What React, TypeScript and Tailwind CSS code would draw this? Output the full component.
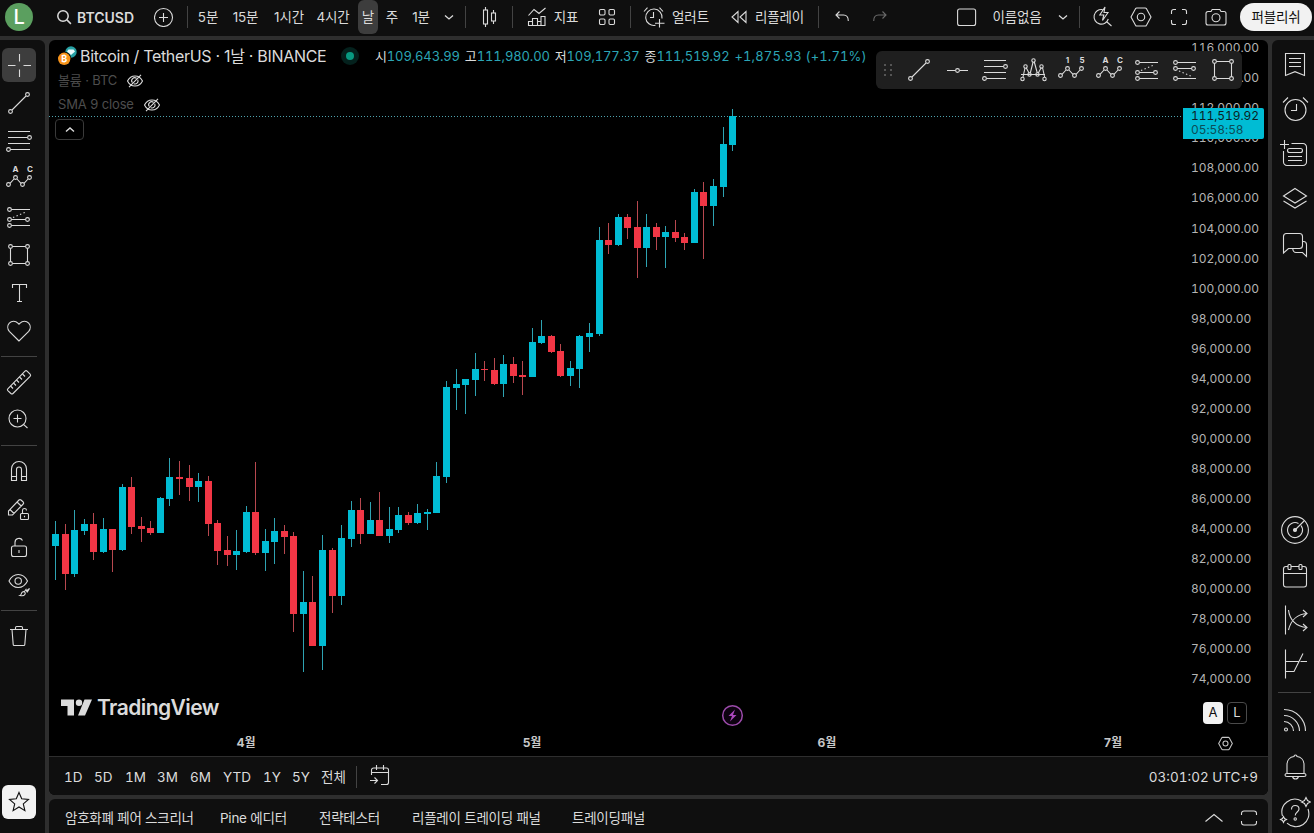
import type { ReactNode } from 'react';
import clsx from 'clsx';

interface IconProps {
    size?: number;
    children: ReactNode;
    className?: string;
}

/** Thin outline icon, drawn on a square grid of its own pixel size */
function Icon({ size = 28, children, className }: IconProps) {
    return (
        <svg
            width={size}
            height={size}
            viewBox={`0 0 ${size} ${size}`}
            fill="none"
            stroke="currentColor"
            strokeWidth="1.1"
            className={clsx('shrink-0', className)}
        >
            {children}
        </svg>
    );
}

function Dots({ points, r = 1.9 }: { points: [number, number][]; r?: number }) {
    return (
        <>
            {points.map(([x, y]) => (
                <circle key={`${x}-${y}`} cx={x} cy={y} r={r} />
            ))}
        </>
    );
}

/* ---------- drawing tools ---------- */

const CrossIcon = () => (
    <Icon>
        <path d="M3 14.5h7.5M18.5 14.5H26M14.5 3v7.5M14.5 18.5V26" />
    </Icon>
);

const TrendIcon = () => (
    <Icon>
        <path d="M7 21 21 7" />
        <Dots points={[[22.5, 5.5], [5.5, 22.5]]} />
    </Icon>
);

const HLineIcon = () => (
    <Icon>
        <path d="M4 14.5h8.4M16.6 14.5H25" />
        <Dots points={[[14.5, 14.5]]} />
    </Icon>
);

const FibIcon = () => (
    <Icon>
        <path d="M3 4.5h22M3 10.5h19.5M3 16.5h22M5.5 22.5H25" />
        <Dots points={[[24.5, 10.5], [3.5, 22.5]]} />
    </Icon>
);

const PatternIcon = () => (
    <Icon>
        <path d="M4 21l2-9M7.300 12l3 5.500M11.300 17l2.800-11M15.300 6l3 11M19.300 17l3-5.500M23.600 12l2 9M2 18.500h24" />
        <Dots points={[[3.5, 23], [6.5, 10.5], [10.5, 18.5], [14.5, 4.5], [18.5, 18.5], [22.5, 10.5], [25.5, 23]]} r={1.7} />
    </Icon>
);

function WaveIcon({ from, to }: { from: string; to: string }) {
    return (
        <Icon>
            <path d="M5 18.300 9 14M12 14l4 4.300M19 18.300 23 14" />
            <Dots points={[[3.5, 19.5], [10.5, 12.5], [17.5, 19.5], [24.5, 12.5]]} />
            <text x="10.500" y="7" textAnchor="middle" stroke="none" fill="currentColor" className="font-['Inter'] text-[8px] font-bold">{from}</text>
            <text x="25" y="7" textAnchor="middle" stroke="none" fill="currentColor" className="font-['Inter'] text-[8px] font-bold">{to}</text>
        </Icon>
    );
}

const LongIcon = () => (
    <Icon>
        <path d="M6.500 6.500H25M6.500 16.500h14M6.500 22.500H25" />
        <path d="M8 14.500 22 8.500" strokeDasharray="1.400 2.400" />
        <Dots points={[[4.5, 6.5], [4.5, 16.5], [22.5, 16.5], [4.5, 22.5]]} />
    </Icon>
);

const ShortIcon = () => (
    <Icon>
        <path d="M6.500 6.500H25M6.500 12.500h14M6.500 22.500H25" />
        <path d="M8 15 22 21" strokeDasharray="1.400 2.400" />
        <Dots points={[[4.5, 6.5], [4.5, 12.5], [22.5, 12.5], [4.5, 22.5]]} />
    </Icon>
);

const RectIcon = () => (
    <Icon>
        <path d="M7.500 5.500h13M7.500 22.500h13M5.500 7.500v13M22.500 7.500v13" />
        <Dots points={[[5.5, 5.5], [22.5, 5.5], [5.5, 22.5], [22.5, 22.5]]} />
    </Icon>
);

const TextIcon = () => (
    <Icon>
        <path d="M7.500 9V5.500h14V9M14.500 5.500v17M12 22.500h5" />
    </Icon>
);

const HeartIcon = () => (
    <Icon>
        <path d="M14 24 4.300 14.300a6.300 6.300 0 0 1 0-8.200 5.900 5.900 0 0 1 8.600 0L14 7.300l1.100-1.200a5.900 5.900 0 0 1 8.600 0 6.300 6.300 0 0 1 0 8.200z" />
    </Icon>
);

const RulerIcon = () => (
    <Icon>
        <path d="M2.800 20.800 20 3.200a1.500 1.500 0 0 1 2.100 0l3 3a1.500 1.500 0 0 1 0 2.100L8 25.500a1.500 1.500 0 0 1-2.100 0l-3.100-2.900a1.300 1.300 0 0 1 0-1.800z" />
        <path d="m5.500 18 2.500 2.500M8.500 15l2.500 2.500M11.500 12l2.500 2.500M14.500 9l2.500 2.500M17.500 6l2.500 2.500" />
    </Icon>
);

const ZoomInIcon = () => (
    <Icon>
        <circle cx="12.500" cy="12.500" r="8.500" />
        <path d="M12.500 8.500v8M8.500 12.500h8M18.700 18.700l3.800 3.300" />
    </Icon>
);

const MagnetIcon = () => (
    <Icon>
        <path d="M6.500 23.500V12a7.500 7.500 0 0 1 15 0v11.500h-5V12.500a2.500 2.500 0 0 0-5 0v11zM6.500 19.500h5M16.500 19.500h5" />
    </Icon>
);

const PencilLockIcon = () => (
    <Icon>
        <path d="M3.500 20v-4L14 5a1.500 1.500 0 0 1 2 0l2.200 2a1.500 1.500 0 0 1 0 2L7.500 20zM12 7l4.200 4M5 14.500l4 4" />
        <rect x="15.500" y="18.500" width="8" height="6" rx="1" />
        <path d="M17.500 18.500v-3a2 2 0 0 1 4 0M19.500 20.700v1.600" />
    </Icon>
);

const UnlockIcon = () => (
    <Icon>
        <rect x="6.500" y="13" width="15" height="10.500" rx="2" />
        <path d="M10 13V9.500a4 4 0 0 1 7.500-2M14 17v3" />
    </Icon>
);

const EyeBrushIcon = () => (
    <Icon>
        <path d="M4 10c2-4 5.500-6.500 9.200-6.500S20.500 6 22.500 10c-2 4-5.600 6.500-9.300 6.500S6 14 4 10z" />
        <circle cx="13.200" cy="10" r="3.200" />
        <path d="M15 24.500c1.500-.5 1-2.500 2.500-3.500s3.500.5 2.500 2.200-3 1.800-5 1.300zM19.500 20.500l1.500-2 .5 1.500 3-2.500-2.500 4" />
    </Icon>
);

const TrashIcon = () => (
    <Icon>
        <path d="M5 7.500h18M10.500 7.500V5.700c0-.7.500-1.200 1.200-1.200h4.600c.7 0 1.200.5 1.200 1.200v1.800M7 7.500l1.200 15c0 .6.500 1 1 1h9.600c.5 0 1-.4 1-1L21 7.500" />
    </Icon>
);

const StarIcon = () => (
    <Icon>
        <path d="m14 4.500 2.700 6.300 6.800.6-5.200 4.500 1.600 6.700-5.900-3.600-5.900 3.600 1.600-6.700-5.200-4.500 6.800-.6z" />
    </Icon>
);

/* ---------- header icons ---------- */

const SearchIcon = () => (
    <Icon size={16} className="stroke-[1.5]">
        <circle cx="7" cy="7" r="5.200" />
        <path d="m10.900 10.900 4 4" />
    </Icon>
);

const PlusCircleIcon = () => (
    <Icon size={20}>
        <circle cx="9.500" cy="10.500" r="9" />
        <path d="M9.500 6v9M5 10.500h9" />
    </Icon>
);

const ChevronDown = () => (
    <Icon size={10} className="stroke-[1.3]">
        <path d="m1 3.500 4 3.500 4-3.500" />
    </Icon>
);

const CandlesIcon = () => (
    <Icon size={20}>
        <path d="M6.500 0v3M6.500 17v3M14.500 3v3M14.500 14v3" />
        <rect x="4.500" y="3" width="4" height="14" />
        <rect x="12.500" y="6" width="4" height="8" />
    </Icon>
);

const IndicatorsIcon = () => (
    <Icon size={20}>
        <path d="m1.500 8.500 5.500-6 5 4 6.500-5.500M1.500 18.500v-4h4v4zM5.500 18.500v-7h5v7M10.500 18.500v-4h3.500M14 18.500v-9h4v9zM1.500 18.500H18" />
    </Icon>
);

const LayoutGridIcon = () => (
    <Icon size={18}>
        <rect x="1.500" y="1.500" width="5.500" height="5.500" rx="1.200" />
        <rect x="11" y="1.500" width="5.500" height="5.500" rx="1.200" />
        <rect x="1.500" y="11" width="5.500" height="5.500" rx="1.200" />
        <rect x="11" y="11" width="5.500" height="5.500" rx="1.200" />
    </Icon>
);

const AlertAddIcon = () => (
    <Icon size={22}>
        <path d="M12.500 19.300A8.200 8.200 0 1 1 19 12.500M10.500 6v5.500H7M1 5.500 4.500 1.700M16.500 1.700 20 5.500M16.500 13v8.500M12 17.200h9.500" />
    </Icon>
);

const ReplayIcon = () => (
    <Icon size={18}>
        <path d="M8 3.500v11L2 9zM16 3.500v11L10 9z" />
    </Icon>
);

const UndoIcon = ({ flip = false }: { flip?: boolean }) => (
    <Icon size={16} className={clsx(flip && '-scale-x-100 text-[#6a6a6a]')}>
        <path d="M5.500 2.500 2 6l3.500 3.500M2 6h7.500c3 0 4.800 2 4.800 6" />
    </Icon>
);

const SquareIcon = () => (
    <Icon size={20}>
        <rect x=".600" y="2" width="18" height="16.500" rx="2" />
    </Icon>
);

const QuickSearchIcon = () => (
    <Icon size={22}>
        <path d="M10.500 3.600A7.300 7.300 0 1 0 16.300 13M15 16l4.500 4M13 1 7.800 9h4l-1.300 5.500L16 6.500h-4z" />
    </Icon>
);

const HexIcon = ({ size = 22 }: { size?: number }) => (
    <svg width={size} height={size} viewBox="0 0 22 22" fill="none" stroke="currentColor" strokeWidth={size > 18 ? 1.1 : 1.5}>
        <path d="M6.700 2h8.600c.5 0 .9.300 1.200.7L21 11l-4.500 8.300c-.3.400-.7.700-1.200.7H6.700c-.5 0-.9-.3-1.200-.7L1 11l4.500-8.300c.3-.4.700-.7 1.200-.7z" />
        <circle cx="11" cy="11" r="3.700" />
    </svg>
);

const FullscreenIcon = () => (
    <Icon size={18}>
        <path d="M1.500 6V3.500a2 2 0 0 1 2-2H6M12 1.500h2.500a2 2 0 0 1 2 2V6M16.500 12v2.500a2 2 0 0 1-2 2H12M6 16.500H3.500a2 2 0 0 1-2-2V12" />
    </Icon>
);

const CameraIcon = () => (
    <Icon size={22}>
        <path d="M7.200 3.500 6 5.500H3a2 2 0 0 0-2 2v9.500a2 2 0 0 0 2 2h16a2 2 0 0 0 2-2V7.500a2 2 0 0 0-2-2h-3l-1.200-2z" />
        <circle cx="11" cy="11.800" r="4" />
    </Icon>
);

const EyeOffIcon = () => (
    <Icon size={18}>
        <path d="M1.500 9c1.600-3.200 4.300-5 7.500-5s5.900 1.800 7.500 5c-1.600 3.200-4.300 5-7.500 5S3.100 12.200 1.500 9zM3 15.200 15 2.800M6.300 10.500A3 3 0 0 1 10.500 6.300M11.800 7.800A3 3 0 0 1 7.800 11.700" />
    </Icon>
);

const GotoDateIcon = () => (
    <Icon size={22}>
        <path d="M2.500 10V5a2 2 0 0 1 2-2h13a2 2 0 0 1 2 2v12.500a2 2 0 0 1-2 2H12M2.500 7.500h17M7.500 0v5M14.500 0v5M1 15.500h7.500M5.500 12.500l3 3-3 3" />
    </Icon>
);

/* ---------- right rail ---------- */

const WatchlistIcon = () => (
    <Icon size={32}>
        <path d="M6.500 4.500h19v22L16 22.700l-9.500 3.800zM10 9.500h12M10 13.500h12M10 17.500h12" />
    </Icon>
);

const AlarmIcon = () => (
    <Icon size={32}>
        <circle cx="16.500" cy="17" r="10.500" />
        <path d="M17.500 11v6.500H12M4 9.500l5-5M24 4.500l5 5" />
    </Icon>
);

const NotesIcon = () => (
    <Icon size={32}>
        <path d="M5.500 2v9M1 6.500h9M12.500 5.500H24a3.500 3.500 0 0 1 3.500 3.500v15a3.500 3.500 0 0 1-3.500 3.500H8A3.500 3.500 0 0 1 4.500 24V13M9 18.500h14M9 22.500h14" />
        <rect x="8.500" y="10.500" width="15" height="4" rx="2" />
    </Icon>
);

const LayersIcon = () => (
    <Icon size={32}>
        <path d="m16 5.500 11.500 7.500L16 20 4.500 13zM4.500 18 16 25l11.500-7" />
    </Icon>
);

const ChatIcon = () => (
    <Icon size={32}>
        <path d="M4.500 24V7.500c0-2 1-3 3-3h13c2 0 3 1 3 3v9c0 2-1 3-3 3H9.500zM23.500 12.500h1c2 0 3 1 3 3v12l-4-4H17c-2 0-3-1-3.300-4" />
    </Icon>
);

const RadarIcon = () => (
    <Icon size={32}>
        <circle cx="16" cy="16" r="13.400" />
        <path d="M22 11.500A7.500 7.500 0 1 1 19.500 9.400M16 16 25 7" />
        <circle cx="16" cy="16" r="1.500" fill="currentColor" />
    </Icon>
);

const CalendarIcon = () => (
    <Icon size={32}>
        <path d="M9 7.500H7A2.500 2.500 0 0 0 4.500 10v15.500A2.500 2.500 0 0 0 7 28h18a2.500 2.500 0 0 0 2.500-2.500V10A2.500 2.500 0 0 0 25 7.500h-2M12 7.500h8M4.500 14.500h23" />
        <rect x="9" y="5.500" width="3" height="5" rx="1" />
        <rect x="20" y="5.500" width="3" height="5" rx="1" />
    </Icon>
);

const OptionsCurveIcon = () => (
    <Icon size={32}>
        <path d="M6.500 1.500v29M9.500 26C12 16 17 10.500 28 9.500M9.500 6c1 9 7 17 18.500 17.500M24 6l4 3.500-4 3.500M24 20l4 3.500-4 3.500" />
    </Icon>
);

const PayoffIcon = () => (
    <Icon size={32}>
        <path d="M6.500 1.500v29M6.500 13.500h13M21.500 13.500H28M6.500 23.500H15l9-18" />
    </Icon>
);

const FeedIcon = () => (
    <Icon size={32}>
        <circle cx="7" cy="24.500" r="1.500" />
        <path d="M5 16.500a9.500 9.500 0 0 1 9.500 9.500M5 10.500A15.500 15.500 0 0 1 20.500 26M5 4.500A21.500 21.500 0 0 1 26.500 26" />
    </Icon>
);

const BellIcon = () => (
    <Icon size={32}>
        <path d="M8 22.500v-9c0-4.500 3-7.500 7-8a1.500 1.500 0 0 1 3 0c4 .5 7 3.500 7 8v9M8 22.500h17c1.500 0 2 .5 2 1.500s-.5 1.500-2 1.500H8c-1.500 0-2-.5-2-1.500s.5-1.500 2-1.500zM13.500 25.500c.5 2 1.500 2.500 3 2.500s2.500-.5 3-2.500" />
    </Icon>
);

const HelpIcon = () => (
    <Icon size={32}>
        <path d="M22.500 5A13 13 0 0 0 3.500 20M8 27.200A13 13 0 0 0 29 13" />
        <path d="M12.500 13.500c0-2.500 1.500-4 3.700-4s3.800 1.500 3.800 3.500c0 3-3.800 3-3.800 6.500" />
        <circle cx="16.200" cy="23" r="1.200" />
        <path d="M27 1.500 28.500 4.500 31.500 6 28.500 7.500 27 10.500 25.500 7.500 22.500 6 25.500 4.500zM4.500 20.500l1 2 2 1-2 1-1 2-1-2-2-1 2-1z" />
    </Icon>
);

/* ---------- chart data ---------- */

const UP = '#00bcd4';
const DOWN = '#f23645';

// [x, bodyTop, bodyBottom, high, low, up]
const CANDLES: [number, number, number, number, number, number][] = [
    [52, 534, 546, 521, 580, 1], [62, 534, 574, 524, 590, 0], [71, 530, 574, 510, 577, 1], [81, 524, 531, 519, 535, 1],
    [90, 524, 552, 513, 560, 0], [100, 529, 552, 518, 553, 1], [109, 529, 550, 529, 572, 0], [119, 487, 550, 484, 551, 1],
    [128, 487, 527, 477, 534, 0], [138, 526, 529, 517, 542, 0], [147, 528, 533, 521, 535, 0], [157, 498, 533, 497, 533, 1],
    [166, 477, 499, 458, 506, 1], [176, 477, 479, 461, 495, 0], [186, 478, 487, 465, 501, 0], [195, 481, 487, 473, 502, 1],
    [205, 481, 524, 476, 536, 0], [214, 523, 551, 520, 565, 0], [224, 550, 555, 536, 566, 0], [233, 551, 555, 530, 570, 1],
    [243, 512, 552, 506, 553, 1], [252, 512, 553, 462, 555, 0], [262, 541, 553, 529, 571, 1], [271, 531, 542, 518, 564, 1],
    [281, 531, 537, 525, 554, 0], [290, 536, 614, 532, 632, 0], [300, 602, 614, 571, 672, 1], [309, 602, 646, 576, 646, 0],
    [319, 550, 646, 535, 670, 1], [329, 550, 596, 548, 613, 0], [338, 538, 596, 525, 605, 1], [348, 510, 539, 501, 547, 1],
    [357, 510, 534, 498, 544, 0], [367, 520, 534, 502, 534, 1], [376, 520, 536, 492, 536, 0], [386, 529, 536, 507, 543, 1],
    [395, 515, 530, 507, 533, 1], [405, 515, 523, 512, 525, 0], [414, 513, 523, 504, 524, 1], [424, 512, 514, 509, 530, 1],
    [433, 476, 513, 462, 513, 1], [443, 387, 477, 381, 483, 1], [453, 384, 388, 369, 410, 1], [462, 379, 385, 379, 414, 1],
    [472, 369, 380, 353, 396, 1], [481, 369, 370, 361, 381, 0], [491, 370, 384, 358, 385, 0], [500, 364, 384, 355, 397, 1],
    [510, 364, 376, 357, 383, 0], [519, 375, 377, 361, 395, 0], [529, 342, 377, 328, 377, 1], [538, 336, 343, 320, 344, 1],
    [548, 336, 352, 335, 353, 0], [557, 351, 376, 344, 377, 0], [567, 368, 376, 361, 386, 1], [576, 336, 369, 335, 388, 1],
    [586, 333, 337, 323, 352, 1], [596, 240, 334, 227, 336, 1], [605, 240, 245, 223, 254, 0], [615, 217, 245, 214, 246, 1],
    [624, 217, 228, 214, 239, 0], [634, 227, 248, 201, 278, 0], [643, 227, 248, 214, 267, 1], [653, 227, 237, 223, 250, 0],
    [662, 232, 237, 226, 268, 1], [672, 232, 238, 220, 242, 0], [681, 237, 243, 233, 250, 0], [691, 192, 243, 189, 243, 1],
    [700, 192, 206, 182, 259, 0], [710, 186, 206, 179, 226, 1], [720, 144, 187, 127, 197, 1], [729, 116, 145, 109, 151, 1],
];

function Candles() {
    return (
        <svg viewBox="49 40 1134 690" width="1134" height="690" shapeRendering="crispEdges" className="absolute inset-0">
            <path d="M49 116.500H1183" stroke="#4fa3ae" strokeWidth="1" strokeDasharray="1 2" />
            {CANDLES.map(([x, top, bottom, high, low, up]) => (
                <g key={x} fill={up ? UP : DOWN}>
                    <rect x={x + 3} y={high} width="1" height={low - high} fill={up ? '#2ea3b2' : '#b8484f'} />
                    <rect x={x} y={top} width="7" height={bottom - top} />
                </g>
            ))}
            <g shapeRendering="auto">
                <circle cx="732.500" cy="715.500" r="9.800" fill="#0d0210" stroke="#9c4bab" strokeWidth="1.500" />
                <path d="m735 709.500-6.500 6.500h3.500l-2 5.500 6.500-6.500H733z" fill="#ab47bc" />
            </g>
        </svg>
    );
}

const PRICES = Array.from({ length: 22 }, (_, i) => 116000 - i * 2000);

function PriceAxis() {
    return (
        <div className="relative flex w-[85px] flex-col overflow-hidden">
            <div className="-mt-[6.8px] text-[12px] tracking-[-0.07px] text-[#b4b4b4] tabular-nums">
                {PRICES.map((p) => (
                    <div key={p} className="flex h-[30.05px] items-center pl-2">
                        {p.toLocaleString('en-US')}.00
                    </div>
                ))}
            </div>
            <div className="mt-[8px] flex gap-1 pl-5 text-[13px]">
                <div className="flex h-[22px] w-5 items-center justify-center rounded bg-[#f2f2f2] text-[#0f0f0f]">A</div>
                <div className="flex h-[22px] w-5 items-center justify-center rounded border border-[#4a4a4a]">L</div>
            </div>
            {/* Last price */}
            <div className="absolute top-[68px] left-0 h-[31px] w-[81px] rounded-r-[2px] bg-[#00bcd4] pt-px pl-2 text-[12px] leading-[14px] tracking-[-0.07px] text-[#0b1f24] tabular-nums">
                <div>111,519.92</div>
                <div className="text-[#0b4d57]">05:58:58</div>
            </div>
        </div>
    );
}

function Ohlc({ label, value }: { label: string; value: string }) {
    return (
        <span className="flex">
            <span className="text-[#dbdbdb]">{label}</span>
            <span>{value}</span>
        </span>
    );
}

function Legend() {
    return (
        <div className="relative flex flex-col">
            <div className="mt-1 flex h-6 items-center pl-[9px]">
                <svg width="19" height="20" viewBox="0 0 19 20">
                    <circle cx="13" cy="6" r="5.700" fill="#26a0a3" />
                    <path d="M10.500 3.500h5l1.500 2-4 3.500-4-3.500z" fill="#eafafa" />
                    <circle cx="6.200" cy="12.800" r="7" fill="#000" />
                    <circle cx="6.200" cy="12.800" r="6.200" fill="#f7931a" />
                    <text x="6.300" y="16.300" textAnchor="middle" fill="#fff" className="font-['Inter'] text-[9px] font-bold">₿</text>
                </svg>
                <div className="ml-[3px] w-[261px] text-[16px] tracking-[-0.31px] whitespace-nowrap text-[#dbdbdb]">
                    Bitcoin / TetherUS · 1날 · BINANCE
                </div>
                <div className="flex h-[18px] w-[18px] items-center justify-center rounded-full bg-[#04211d]">
                    <div className="h-2 w-2 rounded-full bg-[#089981]" />
                </div>
                <div className="mt-[2px] ml-4 flex gap-[5px] text-[13px] tracking-[-0.14px] whitespace-nowrap text-[#2ba5b5] tabular-nums">
                    <Ohlc label="시" value="109,643.99" />
                    <Ohlc label="고" value="111,980.00" />
                    <Ohlc label="저" value="109,177.37" />
                    <Ohlc label="종" value="111,519.92" />
                    <span className="tracking-[0.15px]">+1,875.93 (+1.71%)</span>
                </div>
            </div>
            <div className="flex h-6 items-center gap-[9px] pt-px pl-[9px] text-[13px] tracking-[-0.13px] text-[#4d4d4d]">
                볼륨 · BTC
                <span className="text-[#dbdbdb]"><EyeOffIcon /></span>
            </div>
            <div className="flex h-6 items-center gap-[9px] pt-px pl-[9px] text-[13px] tracking-[-0.13px] text-[#4d4d4d]">
                SMA 9 close
                <span className="text-[#dbdbdb]"><EyeOffIcon /></span>
            </div>
            <div className="mt-[3px] ml-[6px] flex h-[21px] w-[29px] items-center justify-center rounded border border-[#3a3a3a] bg-black">
                <Icon size={10} className="stroke-[1.4]">
                    <path d="m1 6.500 4-3.500 4 3.500" />
                </Icon>
            </div>
        </div>
    );
}

function FloatingTools() {
    const tools = [
        <TrendIcon />, <HLineIcon />, <FibIcon />, <PatternIcon />, <WaveIcon from="1" to="5" />,
        <WaveIcon from="A" to="C" />, <LongIcon />, <ShortIcon />, <RectIcon />,
    ];
    return (
        <div className="absolute top-[11px] left-[827px] flex h-[38px] items-center rounded-md bg-[#1f1f1f]">
            <div className="grid w-6 grid-cols-2 justify-center gap-x-1 gap-y-[3px] px-2">
                {Array.from({ length: 6 }, (_, i) => (
                    <div key={i} className="h-[2px] w-[2px] bg-[#555]" />
                ))}
            </div>
            {tools.map((tool, i) => (
                <div key={i} className="flex w-[38px] justify-center">{tool}</div>
            ))}
        </div>
    );
}

function Cell({ className, children }: { className: string; children?: ReactNode }) {
    return <div className={clsx('flex shrink-0 items-center justify-center whitespace-nowrap', className)}>{children}</div>;
}

function Divider({ className }: { className: string }) {
    return (
        <Cell className={className}>
            <div className="h-[22px] w-px bg-[#434343]" />
        </Cell>
    );
}

function TopBar() {
    return (
        <header className="flex h-9 items-center bg-[#0f0f0f] pb-[2px] text-[13.5px] tracking-[-0.15px]">
            <Cell className="w-[43px] pr-[5px]">
                <div className="flex h-7 w-7 items-center justify-center rounded-full bg-[#5b9f5f] text-[20px] font-medium text-white">L</div>
            </Cell>
            <Cell className="w-[104px] gap-[5px] text-[14px] font-semibold tracking-normal">
                <SearchIcon />
                BTCUSD
            </Cell>
            <Cell className="w-[33px]"><PlusCircleIcon /></Cell>
            <Divider className="w-[15px]" />
            <Cell className="w-[26px]">5분</Cell>
            <Cell className="w-[49px]">15분</Cell>
            <Cell className="w-[38px]">1시간</Cell>
            <Cell className="w-[50px]">4시간</Cell>
            <Cell className="h-[34px] w-5 rounded-md bg-[#3d3d3d]">날</Cell>
            <Cell className="w-[28px]">주</Cell>
            <Cell className="w-[30px]">1분</Cell>
            <Cell className="w-[26px]"><ChevronDown /></Cell>
            <Divider className="w-[7px]" />
            <Cell className="w-10"><CandlesIcon /></Cell>
            <Divider className="w-[7px]" />
            <Cell className="w-[73px] gap-[7px]"><IndicatorsIcon />지표</Cell>
            <Cell className="w-9"><LayoutGridIcon /></Cell>
            <Divider className="w-[11px]" />
            <Cell className="w-20 gap-[7px]"><AlertAddIcon />얼러트</Cell>
            <Cell className="w-[102px] gap-[7px]"><ReplayIcon />리플레이</Cell>
            <Divider className="w-px" />
            <Cell className="w-[45px]"><UndoIcon /></Cell>
            <Cell className="w-8"><UndoIcon flip /></Cell>
            <Cell className="ml-[50px] w-[42px]"><SquareIcon /></Cell>
            <Cell className="w-[58px]">이름없음</Cell>
            <Cell className="w-[33px]"><ChevronDown /></Cell>
            <Divider className="w-px" />
            <Cell className="w-[46px]"><QuickSearchIcon /></Cell>
            <Cell className="w-[30px]"><HexIcon /></Cell>
            <Cell className="w-[45px]"><FullscreenIcon /></Cell>
            <Cell className="w-[30px]"><CameraIcon /></Cell>
            <Cell className="ml-[9px] h-7 w-[72px] rounded-full bg-[#f2f2f2] text-[#0f0f0f]">퍼블리쉬</Cell>
        </header>
    );
}

function LeftBar() {
    const drawing = [<TrendIcon />, <FibIcon />, <WaveIcon from="A" to="C" />, <LongIcon />, <RectIcon />, <TextIcon />, <HeartIcon />];
    const cell = 'h-[38px] w-[38px]';
    return (
        <aside className="flex w-[45px] flex-col rounded-tr-md bg-[#0f0f0f] pt-2">
            <Cell className="mb-[2px] ml-[2px] h-[34px] w-[34px] rounded-md bg-[#3d3d3d]"><CrossIcon /></Cell>
            {drawing.map((icon, i) => <Cell key={i} className={cell}>{icon}</Cell>)}
            <div className="mt-[6px] mb-[6px] ml-px h-px w-9 bg-[#434343]" />
            <Cell className={cell}><RulerIcon /></Cell>
            <Cell className={cell}><ZoomInIcon /></Cell>
            <div className="mt-[6px] mb-[6px] ml-px h-px w-9 bg-[#434343]" />
            <Cell className={cell}><MagnetIcon /></Cell>
            <Cell className={cell}><PencilLockIcon /></Cell>
            <Cell className={cell}><UnlockIcon /></Cell>
            <Cell className={cell}><EyeBrushIcon /></Cell>
            <div className="mt-[6px] mb-[6px] ml-px h-px w-9 bg-[#434343]" />
            <Cell className={cell}><TrashIcon /></Cell>
            <Cell className="mt-auto mb-[14px] ml-[2px] h-[34px] w-[34px] rounded-md bg-[#f2f2f2] text-[#0f0f0f]"><StarIcon /></Cell>
        </aside>
    );
}

function RightBar() {
    return (
        <aside className="flex w-[42px] flex-col rounded-tl-md bg-[#0f0f0f] pt-[3px] pl-1">
            <Cell className="h-11"><WatchlistIcon /></Cell>
            <Cell className="h-11"><AlarmIcon /></Cell>
            <Cell className="h-[46px]"><NotesIcon /></Cell>
            <Cell className="h-[43px]"><LayersIcon /></Cell>
            <Cell className="h-[50px]"><ChatIcon /></Cell>
            <Cell className="mt-[238px] h-11"><RadarIcon /></Cell>
            <Cell className="h-[46px]"><CalendarIcon /></Cell>
            <Cell className="h-[43px]"><OptionsCurveIcon /></Cell>
            <Cell className="h-[46px]"><PayoffIcon /></Cell>
            <div className="mt-[5px] ml-[2px] h-px w-[33px] shrink-0 bg-[#434343]" />
            <Cell className="mt-[4px] h-[48px]"><FeedIcon /></Cell>
            <Cell className="h-[44px]"><BellIcon /></Cell>
            <Cell className="h-[46px]"><HelpIcon /></Cell>
        </aside>
    );
}

function Logo() {
    return (
        <div className="relative mt-auto mb-[10px] ml-3 flex items-center text-[#dbdbdb]">
            <svg width="31" height="17" viewBox="0 0 31 17" fill="currentColor">
                <path d="M0 .500h13v16H6.500V7H0zM23.500.500H31l-7 16h-7z" />
                <circle cx="18" cy="3.700" r="3.200" />
            </svg>
            <span className="mt-px ml-[5px] text-[21px] leading-[25px] font-semibold tracking-[-0.56px]">TradingView</span>
        </div>
    );
}

function ChartPanel() {
    return (
        <section className="flex h-[755px] flex-col overflow-hidden rounded-md bg-black">
            <div className="relative flex h-[690px]">
                <div className="relative flex w-[1134px] flex-col">
                    <Candles />
                    <Legend />
                    <Logo />
                </div>
                <PriceAxis />
                <FloatingTools />
            </div>
            {/* Time axis */}
            <div className="flex h-[26px] items-center pl-[177px] text-[12px] font-bold text-[#c8c8c8]">
                <Cell className="w-10">4월</Cell>
                <Cell className="ml-[246px] w-10">5월</Cell>
                <Cell className="ml-[255px] w-10">6월</Cell>
                <Cell className="ml-[246px] w-10">7월</Cell>
                <Cell className="ml-[72px] w-10"><HexIcon size={15} /></Cell>
            </div>
            {/* Date ranges */}
            <div className="flex h-[39px] items-center border-t border-[#2e2e2e] bg-[#0f0f0f] pt-[2px] pl-[15px] text-[13.5px] whitespace-nowrap tabular-nums">
                <div className="w-[30px]">1D</div>
                <div className="w-[31px]">5D</div>
                <div className="w-8">1M</div>
                <div className="w-[33px]">3M</div>
                <div className="w-[33px]">6M</div>
                <div className="w-10">YTD</div>
                <div className="w-[29px]">1Y</div>
                <div className="w-[29px]">5Y</div>
                <div className="w-[35px]">전체</div>
                <Divider className="w-px" />
                <Cell className="w-[46px] pb-[2px]"><GotoDateIcon /></Cell>
                <div className="ml-auto pr-[10px]">03:01:02 UTC+9</div>
            </div>
        </section>
    );
}

function BottomTabs() {
    return (
        <section className="mt-1 flex flex-1 items-center rounded-t-md bg-[#0f0f0f] pt-1 pl-4 text-[13.5px] tracking-[-0.25px] whitespace-nowrap">
            <div className="w-[155px]">암호화폐 페어 스크리너</div>
            <div className="w-[99px]">Pine 에디터</div>
            <div className="w-[93px]">전략테스터</div>
            <div className="w-40">리플레이 트레이딩 패널</div>
            <div>트레이딩패널</div>
            <div className="mr-[10px] ml-auto flex items-center gap-4">
                <Icon size={20}><path d="m1.500 13.500 8.500-7 8.500 7" /></Icon>
                <Icon size={18}>
                    <path d="M1.500 6V4.500a2.500 2.500 0 0 1 2.500-2.500h10a2.500 2.500 0 0 1 2.500 2.500V6M16.500 12v1.500a2.500 2.500 0 0 1-2.500 2.500H4a2.500 2.500 0 0 1-2.500-2.500V12" />
                </Icon>
            </div>
        </section>
    );
}

export default function App() {
    return (
        <div className="flex h-[833px] w-[1314px] flex-col overflow-hidden bg-[#2e2e2e] font-['Inter','Noto_Sans_CJK_KR',sans-serif] text-[#dbdbdb]">
            <TopBar />
            <div className="mt-1 flex min-h-0 flex-1 gap-1">
                <LeftBar />
                <main className="flex w-[1219px] flex-col">
                    <ChartPanel />
                    <BottomTabs />
                </main>
                <RightBar />
            </div>
        </div>
    );
}
